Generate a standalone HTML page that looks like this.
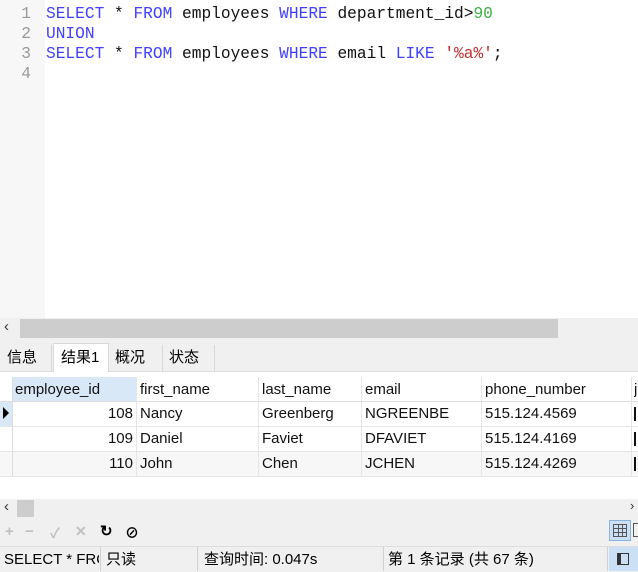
<!DOCTYPE html>
<html><head><style>
body{margin:0;width:638px;height:571px;overflow:hidden;background:#fff;position:relative;font-family:"Liberation Sans","Noto Sans CJK SC",sans-serif;}
.a{position:absolute}
.code{font-family:"Liberation Mono",monospace;font-size:16.2px;line-height:20px;white-space:pre}
.k{color:#4040ff}.n{color:#3cb043}.s{color:#c03030}
.cell{position:absolute;font-size:15px;line-height:25px;color:#111;white-space:nowrap;overflow:hidden}
</style></head><body>
<div class="a" style="left:0;top:0;width:45px;height:318px;background:#f7f7f7"></div>
<div class="a code" style="left:0;top:4px;width:31px;text-align:right;color:#999">1
2
3
4</div>
<div class="a code" style="left:46px;top:4px;color:#111"><span class="k">SELECT</span> * <span class="k">FROM</span> employees <span class="k">WHERE</span> department_id&gt;<span class="n">90</span>
<span class="k">UNION</span>
<span class="k">SELECT</span> * <span class="k">FROM</span> employees <span class="k">WHERE</span> email <span class="k">LIKE</span> <span class="s">'%a%'</span>;
</div>
<div class="a" style="left:0;top:318px;width:638px;height:21px;background:#f0f0f0"></div>
<div class="a" style="left:20px;top:319px;width:538px;height:19px;background:#cdcdcd"></div>
<div class="a" style="left:4px;top:318px;font-size:15px;color:#333">&lsaquo;</div>
<div class="a" style="left:0;top:339px;width:638px;height:32px;background:#f0f0f0;border-bottom:1px solid #ddd"></div>
<div class="a" style="left:0;top:345px;width:52px;height:26px;background:#f0f0f0;border-right:1px solid #d8d8d8;font-size:15px;line-height:26px;padding-left:7px;box-sizing:border-box">信息</div>
<div class="a" style="left:53px;top:343px;width:56px;height:29px;background:#fff;border:1px solid #d8d8d8;border-bottom:none;font-size:15px;line-height:28px;padding-left:7px;box-sizing:border-box">结果1</div>
<div class="a" style="left:110px;top:345px;width:53px;height:26px;border-right:1px solid #d8d8d8;font-size:15px;line-height:26px;padding-left:5px;box-sizing:border-box">概况</div>
<div class="a" style="left:163px;top:345px;width:52px;height:26px;border-right:1px solid #d8d8d8;font-size:15px;line-height:26px;padding-left:6px;box-sizing:border-box">状态</div>
<div class="a" style="left:0;top:372px;width:638px;height:127px;background:#fff"></div>
<div class="a" style="left:12px;top:377px;width:124px;height:24px;background:#d9e8f6"></div>
<div class="a" style="left:0;top:451px;width:638px;height:25px;background:#f7f7f7"></div>
<div class="a" style="left:0;top:401px;width:12px;height:25px;background:#d9e8f6"></div>
<div class="a" style="left:0;top:401px;width:638px;border-top:1px solid #ddd"></div>
<div class="a" style="left:0;top:426px;width:638px;border-top:1px solid #e6e6e6"></div>
<div class="a" style="left:0;top:451px;width:638px;border-top:1px solid #e6e6e6"></div>
<div class="a" style="left:0;top:476px;width:638px;border-top:1px solid #e6e6e6"></div>
<div class="a" style="left:12px;top:377px;height:99px;border-left:1px solid #ddd"></div>
<div class="a" style="left:136px;top:377px;height:99px;border-left:1px solid #e6e6e6"></div>
<div class="a" style="left:258px;top:377px;height:99px;border-left:1px solid #e6e6e6"></div>
<div class="a" style="left:361px;top:377px;height:99px;border-left:1px solid #e6e6e6"></div>
<div class="a" style="left:481px;top:377px;height:99px;border-left:1px solid #e6e6e6"></div>
<div class="a" style="left:631px;top:377px;height:99px;border-left:1px solid #e6e6e6"></div>
<div class="a" style="left:3px;top:407px;width:0;height:0;border-left:6px solid #000;border-top:6px solid transparent;border-bottom:6px solid transparent"></div>
<div class="cell" style="left:15px;top:377px">employee_id</div>
<div class="cell" style="left:140px;top:377px">first_name</div>
<div class="cell" style="left:262px;top:377px">last_name</div>
<div class="cell" style="left:365px;top:377px">email</div>
<div class="cell" style="left:485px;top:377px">phone_number</div>
<div class="cell" style="left:634px;top:377px">j</div>
<div class="cell" style="left:12px;top:401px;width:121px;text-align:right">108</div>
<div class="cell" style="left:140px;top:401px">Nancy</div>
<div class="cell" style="left:262px;top:401px">Greenberg</div>
<div class="cell" style="left:365px;top:401px">NGREENBE</div>
<div class="cell" style="left:485px;top:401px">515.124.4569</div>
<div class="cell" style="left:12px;top:426px;width:121px;text-align:right">109</div>
<div class="cell" style="left:140px;top:426px">Daniel</div>
<div class="cell" style="left:262px;top:426px">Faviet</div>
<div class="cell" style="left:365px;top:426px">DFAVIET</div>
<div class="cell" style="left:485px;top:426px">515.124.4169</div>
<div class="cell" style="left:12px;top:451px;width:121px;text-align:right">110</div>
<div class="cell" style="left:140px;top:451px">John</div>
<div class="cell" style="left:262px;top:451px">Chen</div>
<div class="cell" style="left:365px;top:451px">JCHEN</div>
<div class="cell" style="left:485px;top:451px">515.124.4269</div>
<div class="a" style="left:634px;top:407px;width:2px;height:14px;background:#111"></div>
<div class="a" style="left:634px;top:432px;width:2px;height:14px;background:#111"></div>
<div class="a" style="left:634px;top:457px;width:2px;height:14px;background:#111"></div>
<div class="a" style="left:0;top:499px;width:638px;height:47px;background:#f0f0f0"></div>
<div class="a" style="left:17px;top:500px;width:17px;height:17px;background:#cdcdcd"></div>
<div class="a" style="left:4px;top:498px;font-size:15px;color:#333">&lsaquo;</div>
<div class="a" style="left:630px;top:498px;font-size:13px;color:#333">›</div>
<div class="a" style="left:5px;top:523px;font-size:15px;color:#c0c0c0;font-weight:bold">+</div>
<div class="a" style="left:25px;top:523px;font-size:15px;color:#c0c0c0;font-weight:bold">−</div>
<div class="a" style="left:50px;top:523px;font-size:14px;color:#c0c0c0;font-weight:bold">✓</div>
<div class="a" style="left:75px;top:523px;font-size:14px;color:#c0c0c0;font-weight:bold">✕</div>
<div class="a" style="left:100px;top:522px;font-size:15px;font-weight:bold;color:#000">↻</div>
<div class="a" style="left:125px;top:523px;font-size:14px;font-weight:bold;color:#000">⊘</div>
<div class="a" style="left:609px;top:520px;width:22px;height:21px;background:#cce0f5;border:1px solid #8ab4dd;box-sizing:border-box"></div>
<div class="a" style="left:613px;top:524px;width:14px;height:13px;border:1px solid #555;box-sizing:border-box;background:linear-gradient(90deg,transparent 4px,#555 4px,#555 5px,transparent 5px,transparent 8px,#555 8px,#555 9px,transparent 9px),linear-gradient(transparent 3px,#555 3px,#555 4px,transparent 4px,transparent 7px,#555 7px,#555 8px,transparent 8px)"></div>
<div class="a" style="left:633px;top:523px;width:6px;height:14px;border:1px solid #555;box-sizing:border-box"></div>
<div class="a" style="left:0;top:546px;width:638px;height:25px;background:#f0f0f0;border-top:1px solid #ddd;font-size:15px;line-height:26px"></div>
<div class="a" style="left:4px;top:547px;width:95px;overflow:hidden;font-size:15px;line-height:25px;white-space:nowrap">SELECT * FROM</div>
<div class="a" style="left:100px;top:547px;height:24px;border-left:1px solid #d0d0d0"></div>
<div class="a" style="left:106px;top:547px;font-size:15px;line-height:25px">只读</div>
<div class="a" style="left:197px;top:547px;height:24px;border-left:1px solid #d0d0d0"></div>
<div class="a" style="left:204px;top:547px;font-size:15px;line-height:25px">查询时间: 0.047s</div>
<div class="a" style="left:383px;top:547px;height:24px;border-left:1px solid #d0d0d0"></div>
<div class="a" style="left:388px;top:547px;font-size:15px;line-height:25px">第 1 条记录 (共 67 条)</div>
<div class="a" style="left:607px;top:547px;height:24px;border-left:1px solid #d0d0d0"></div>
<div class="a" style="left:609px;top:547px;width:29px;height:24px;background:#cce0f5"></div>
<div class="a" style="left:617px;top:553px;width:12px;height:12px;border:1px solid #333;box-sizing:border-box;border-left-width:4px"></div>
</body></html>
